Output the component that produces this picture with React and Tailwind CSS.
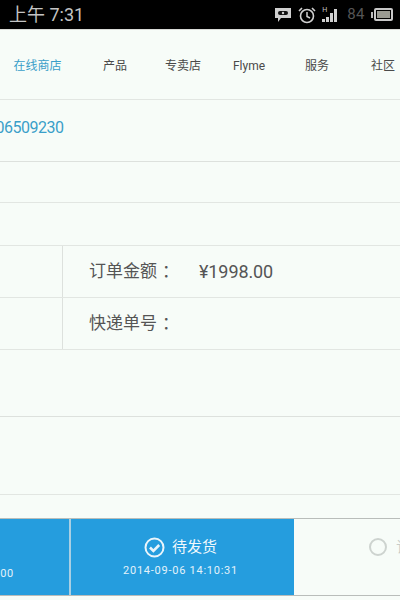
import React from "react";

const sans = "font-['Roboto','Noto_Sans_CJK_SC',sans-serif]";

const navItems = [
  { label: "在线商店", width: "w-[75px]", active: true },
  { label: "产品", width: "w-[80px]" },
  { label: "专卖店", width: "w-[56px]" },
  { label: "Flyme", width: "w-[76px]" },
  { label: "服务", width: "w-[60px]" },
  { label: "社区", width: "w-[72px]" },
];

function StatusBar() {
  return (
    <div className="h-[30px] bg-black border-b border-[#d8dad6] flex items-center justify-between pl-[9px] pr-[7px] shrink-0">
      <span className="text-[18px] leading-none text-[#c4c4c4]">上午 7:31</span>
      <div className="flex items-center">
        <svg width="18" height="16" viewBox="0 0 18 16" className="mr-[6px]">
          <path d="M1 1h16v10H7l-3 4v-4H1z" fill="#d0d0d0" />
          <rect x="4" y="4" width="10" height="4" rx="2" fill="#111" />
          <circle cx="9" cy="6" r="1.2" fill="#d0d0d0" />
        </svg>
        <svg width="18" height="18" viewBox="0 0 18 18" className="mr-[6px]" fill="none" stroke="#d0d0d0">
          <circle cx="9" cy="10" r="6.5" strokeWidth="1.6" />
          <path d="M9 6v4.5l3 1.5" strokeWidth="1.5" />
          <path d="M1 5l3-3M17 5l-3-3" strokeWidth="1.6" />
        </svg>
        <div className="relative w-[20px] h-[14px] flex items-end gap-[1px] mr-[5px]">
          <span className="absolute left-0 top-[-1px] text-[7px] leading-none text-[#c4c4c4]">H</span>
          <span className="w-[3px] h-[3px] bg-[#d0d0d0]" />
          <span className="w-[3px] h-[5px] bg-[#d0d0d0]" />
          <span className="w-[3px] h-[9px] bg-[#d0d0d0]" />
          <span className="w-[3px] h-[13px] bg-[#d0d0d0]" />
        </div>
        <span className="text-[15px] leading-none text-[#555] tracking-[0.5px] mr-[6px]">84</span>
        <div className="w-[2px] h-[6px] bg-[#bbb]" />
        <div className="w-[19px] h-[13px] ml-[1px] border-2 border-[#c8c8c8] rounded-[2px] p-[1px]">
          <div className="w-full h-full bg-[#9a9a92]" />
        </div>
      </div>
    </div>
  );
}

function Nav() {
  return (
    <div className="h-[70px] flex items-center pt-[2px] border-b border-[#e2e6e2] shrink-0">
      {navItems.map((item) => (
        <div
          key={item.label}
          className={`${item.width} shrink-0 text-center text-[12px] ${item.active ? "text-[#3a9fc9]" : "text-[#4a4a4a]"}`}
        >
          {item.label}
        </div>
      ))}
    </div>
  );
}

export default function App() {
  return (
    <div className={`w-[400px] h-[600px] overflow-hidden bg-[#f7fcf8] flex flex-col ${sans}`}>
      <StatusBar />
      <Nav />

      <div className="h-[62px] flex items-center pb-[6px] border-b border-[#dde1dd] shrink-0 overflow-hidden">
        <span className="ml-[-13px] text-[16px] tracking-[-0.5px] text-[#3a9fc9]">906509230</span>
      </div>
      <div className="h-[41px] border-b border-[#e2e6e2] shrink-0" />
      <div className="h-[43px] border-b border-[#e2e6e2] shrink-0" />

      <div className="h-[52px] flex border-b border-[#e2e6e2] shrink-0">
        <div className="w-[63px] border-r border-[#dde1dd] shrink-0" />
        <div className="flex items-center pl-[26px] text-[17px] text-[#555]">
          <span className="w-[110px]">订单金额<span className="ml-[5px]">：</span></span>
          <span className="text-[18px] tracking-[-0.1px]">¥1998.00</span>
        </div>
      </div>
      <div className="h-[52px] flex border-b border-[#e2e6e2] shrink-0">
        <div className="w-[63px] border-r border-[#dde1dd] shrink-0" />
        <div className="flex items-center pl-[26px] text-[17px] text-[#555]">
          <span>快递单号<span className="ml-[5px]">：</span></span>
        </div>
      </div>

      <div className="h-[67px] border-b border-[#dde1dd] shrink-0" />
      <div className="h-[78px] border-b border-[#e2e6e2] shrink-0" />
      <div className="h-[23px] shrink-0" />

      <div className="h-[78px] flex border-y border-[#b9bdba] shrink-0 overflow-hidden">
        <div className="w-[71px] shrink-0 bg-[#259dde] border-r-2 border-[#a9cfe3] flex flex-col items-end justify-end pb-[16px] pr-[55px] overflow-hidden">
          <span className="text-[11px] leading-none text-[#e3f2fa] tracking-[0.75px]">00</span>
        </div>
        <div className="w-[223px] shrink-0 bg-[#259dde] flex flex-col items-center pt-[18px] pr-[4px]">
          <div className="flex items-center gap-[7px]">
            <svg width="21" height="21" viewBox="0 0 21 21" fill="none" stroke="#eaf5fb">
              <circle cx="10.5" cy="10.5" r="9" strokeWidth="2" />
              <path d="M6 10.5l3.4 3.4L15.2 8" strokeWidth="2.6" />
            </svg>
            <span className="text-[15px] leading-none text-[#f0f8fc]">待发货</span>
          </div>
          <span className="mt-[7px] text-[11px] leading-none text-[#e3f2fa] tracking-[0.75px]">2014-09-06 14:10:31</span>
        </div>
        <div className="flex-1 flex items-start pt-[19px] pl-[75px] overflow-hidden">
          <span className="w-[18px] h-[18px] shrink-0 rounded-full border-2 border-[#cdd3cf]" />
          <span className="ml-[9px] text-[15px] leading-[18px] text-[#c8ccc9] whitespace-nowrap">订单</span>
        </div>
      </div>
    </div>
  );
}
